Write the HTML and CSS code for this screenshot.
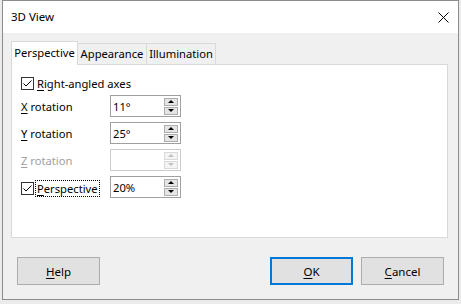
FILE: index.html
```html
<!doctype html>
<html lang="en">
    <head>
        <meta charset="UTF-8" />
        <title>3D View</title>
        <link rel="stylesheet" href="styles.css">
    </head>
    <body>
        <div class="dialog">
            <div class="titlebar">
                <span class="title">3D View</span>
                <svg class="close" width="11" height="11" viewBox="0 0 11 11">
                    <path d="M0.5 0.5 L10.5 10.5 M10.5 0.5 L0.5 10.5" stroke="#000" stroke-width="1" fill="none" />
                </svg>
            </div>

            <div class="content">
                <div class="tabs">
                    <div class="tab tab-active">Perspective</div>
                    <div class="tab">Appearance</div>
                    <div class="tab">Illumination</div>
                </div>

                <div class="panel">
                    <div class="check-row">
                        <span class="checkbox">
                            <svg width="13" height="13" viewBox="0 0 13 13">
                                <path d="M2.5 6.5 L5 9 L10.5 3.5" stroke="#000" stroke-width="1" fill="none" />
                            </svg>
                        </span>
                        <span class="check-label"><u>R</u>ight-angled axes</span>
                    </div>

                    <div class="field-row">
                        <span class="label"><u>X</u> rotation</span>
                        <div class="spin">
                            <span class="spin-value">11°</span>
                            <div class="spin-buttons">
                                <span class="spin-btn"><i class="arrow-up"></i></span>
                                <span class="spin-btn"><i class="arrow-down"></i></span>
                            </div>
                        </div>
                    </div>

                    <div class="field-row">
                        <span class="label"><u>Y</u> rotation</span>
                        <div class="spin">
                            <span class="spin-value">25°</span>
                            <div class="spin-buttons">
                                <span class="spin-btn"><i class="arrow-up"></i></span>
                                <span class="spin-btn"><i class="arrow-down"></i></span>
                            </div>
                        </div>
                    </div>

                    <div class="field-row disabled">
                        <span class="label"><u>Z</u> rotation</span>
                        <div class="spin">
                            <span class="spin-value"></span>
                            <div class="spin-buttons">
                                <span class="spin-btn"><i class="arrow-up"></i></span>
                                <span class="spin-btn"><i class="arrow-down"></i></span>
                            </div>
                        </div>
                    </div>

                    <div class="field-row">
                        <span class="label label-check">
                            <span class="checkbox">
                                <svg width="13" height="13" viewBox="0 0 13 13">
                                    <path d="M2.5 6.5 L5 9 L10.5 3.5" stroke="#000" stroke-width="1" fill="none" />
                                </svg>
                            </span>
                            <span class="focus"><u>P</u>erspective</span>
                        </span>
                        <div class="spin">
                            <span class="spin-value">20%</span>
                            <div class="spin-buttons">
                                <span class="spin-btn"><i class="arrow-up"></i></span>
                                <span class="spin-btn"><i class="arrow-down"></i></span>
                            </div>
                        </div>
                    </div>
                </div>
            </div>

            <div class="actions">
                <button class="btn"><u>H</u>elp</button>
                <span class="spacer"></span>
                <button class="btn btn-default"><u>O</u>K</button>
                <button class="btn"><u>C</u>ancel</button>
            </div>
        </div>
    </body>
</html>
```

FILE: styles.css
```css
* {
    box-sizing: border-box;
}
body {
    margin: 0;
    background-color: #ebebeb;
    font-family: "Noto Sans", sans-serif;
    font-size: 11.2px;
    color: #000000;
}
u {
    text-decoration-thickness: 1px;
    text-underline-offset: 2px;
}
.dialog {
    margin-left: 2px;
    width: 457px;
    height: 300px;
    border: 1px solid #8c8c8c;
    background-color: #f0f0f0;
}
.titlebar {
    display: flex;
    align-items: center;
    height: 32px;
    padding: 0 9px 0 8px;
    background-color: #ffffff;
    font-size: 11.5px;
}
.title {
    flex: 1;
    line-height: 32px;
}
.close {
    display: block;
}
.content {
    padding: 8px 10px 0 8px;
}
.tabs {
    display: flex;
    align-items: flex-end;
    height: 23px;
}
.tab {
    height: 21px;
    width: 69px;
    line-height: 19px;
    text-align: center;
    border: 1px solid #d9d9d9;
    border-left: none;
    border-bottom: none;
    background-color: #f0f0f0;
    white-space: nowrap;
}
.tab-active {
    width: 67px;
    height: 24px;
    line-height: 22px;
    margin-bottom: -1px;
    border-left: 1px solid #d9d9d9;
    background-color: #ffffff;
    position: relative;
}
.panel {
    height: 174px;
    padding: 12px 9px 0 9px;
    border: 1px solid #d9d9d9;
    background-color: #ffffff;
}
.check-row {
    display: flex;
    align-items: center;
    height: 13px;
    margin-bottom: 5px;
}
.checkbox {
    display: block;
    width: 13px;
    height: 13px;
    border: 1px solid #333333;
    background-color: #ffffff;
    flex: none;
}
.checkbox svg {
    display: block;
    margin: -1px;
}
.check-label {
    margin-left: 3px;
}
.field-row {
    display: grid;
    grid-template-columns: 89px 71px;
    align-items: center;
    height: 22px;
    margin-bottom: 5px;
}
.label-check {
    display: flex;
    align-items: center;
    margin-top: 2px;
}
.focus {
    margin-left: 2px;
    padding: 0 1px;
    line-height: 15px;
    outline: 1px dotted #000000;
}
.spin {
    display: flex;
    align-items: center;
    height: 22px;
    padding: 0 2px 0 2px;
    border: 1px solid #a0a0a0;
    background-color: #ffffff;
}
.spin-value {
    flex: 1;
}
.spin-buttons {
    display: flex;
    flex-direction: column;
    gap: 1px;
}
.spin-btn {
    display: flex;
    align-items: center;
    justify-content: center;
    width: 14px;
    height: 8px;
    border: 1px solid #adadad;
    background-color: #e5e5e5;
}
.arrow-up,
.arrow-down {
    width: 0;
    height: 0;
    border-left: 3px solid transparent;
    border-right: 3px solid transparent;
}
.arrow-up {
    border-bottom: 3px solid #000000;
}
.arrow-down {
    border-top: 3px solid #000000;
}
.disabled .label {
    color: #a0a0a0;
}
.disabled .spin {
    border-color: #cccccc;
}
.disabled .spin-btn {
    border-color: #d9d9d9;
    background-color: #f4f4f4;
}
.disabled .arrow-up {
    border-bottom-color: #bfbfbf;
}
.disabled .arrow-down {
    border-top-color: #bfbfbf;
}
.actions {
    display: flex;
    gap: 8px;
    padding: 19px 14px 0 14px;
}
.spacer {
    flex: 1;
}
.btn {
    width: 83px;
    height: 28px;
    padding: 0;
    border: 1px solid #adadad;
    background-color: #e1e1e1;
    font-family: inherit;
    font-size: 11.5px;
    color: #000000;
}
.btn-default {
    border: 2px solid #0078d7;
}
```
